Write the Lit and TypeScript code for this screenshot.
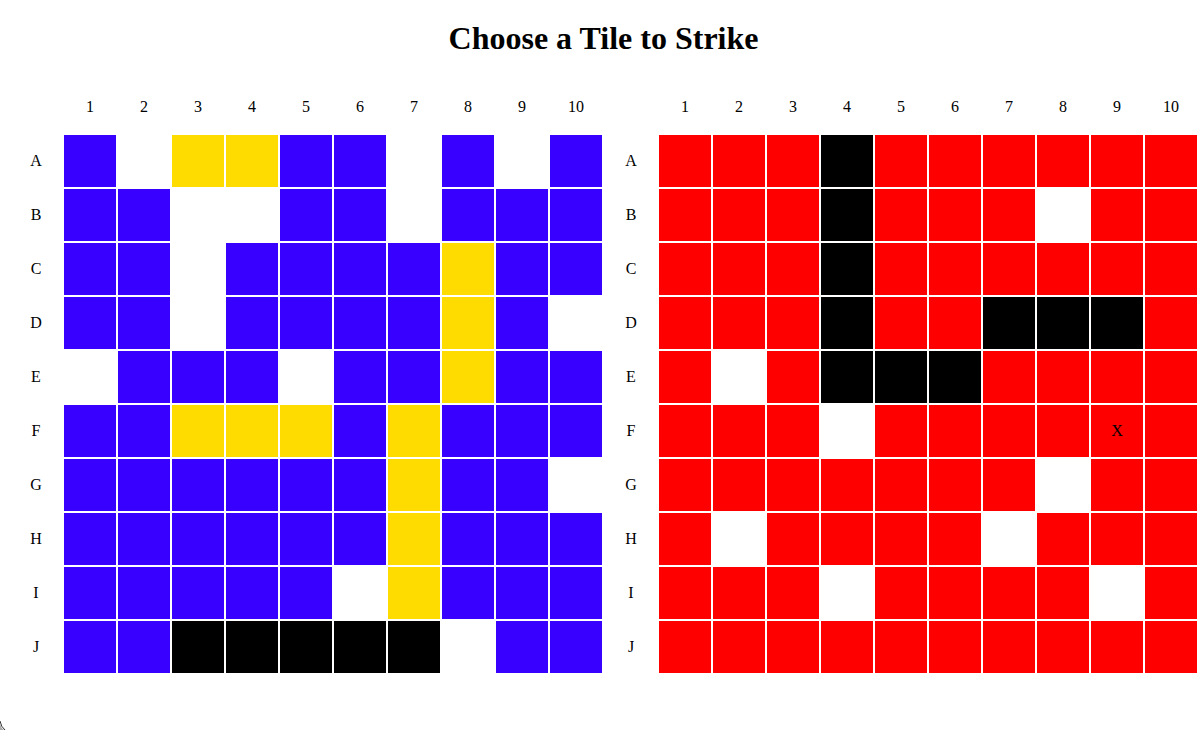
import { LitElement, html, css } from "lit";
import { customElement, property, state } from "lit/decorators.js";
import { classMap } from "lit/directives/class-map.js";

const ROWS = "ABCDEFGHIJ".split("");
const COLS = Array.from({ length: 10 }, (_, i) => i + 1);

// "." open sea, "m" missed shot, "s" ship, "h" hit ship
const PLAYER = [
  ".mss..m.m.",
  "..mm..m...",
  "..m....s..",
  "..m....s.m",
  "m...m..s..",
  "..sss.s...",
  "......s..m",
  "......s...",
  ".....ms...",
  "..hhhhhm..",
];

const ENEMY = [
  "...h......",
  "...h...m..",
  "...h......",
  "...h..hhh.",
  ".m.hhh....",
  "...m......",
  ".......m..",
  ".m....m...",
  "...m....m.",
  "..........",
];

@customElement("game-board")
class GameBoard extends LitElement {
  @property({ attribute: false }) tiles: string[] = [];
  @property({ type: Boolean }) enemy = false;
  @property() target = "";

  static styles = css`
    :host {
      display: block;
    }
    .board {
      display: grid;
      grid-template-columns: repeat(11, 52px);
      grid-auto-rows: 52px;
      gap: 2px;
    }
    .label,
    .tile {
      display: flex;
      align-items: center;
      justify-content: center;
      font: 16px "Liberation Serif", "Times New Roman", serif;
      color: #000;
    }
    .tile {
      margin: 0;
      padding: 0;
      border: 0;
      border-radius: 0;
      background: #3700ff;
    }
    button.tile {
      background: #f00;
      cursor: pointer;
    }
    .tile.ship {
      background: #ffdc00;
    }
    .tile.miss {
      background: #fff;
    }
    .tile.hit {
      background: #000;
    }
  `;

  private strike(id: string) {
    this.dispatchEvent(new CustomEvent("strike", { detail: id }));
  }

  private tile(kind: string, id: string) {
    const classes = classMap({
      tile: true,
      ship: kind === "s",
      miss: kind === "m",
      hit: kind === "h",
    });
    return this.enemy
      ? html`<button type="button" class=${classes} aria-label=${id} @click=${() => this.strike(id)}>${id === this.target ? "X" : ""}</button>`
      : html`<div class=${classes}></div>`;
  }

  render() {
    return html`
      <div class="board">
        <div class="label"></div>
        ${COLS.map((c) => html`<div class="label">${c}</div>`)}
        ${ROWS.map(
          (r, y) => html`
            <div class="label">${r}</div>
            ${COLS.map((c, x) => this.tile(this.tiles[y][x], r + c))}
          `
        )}
      </div>
    `;
  }
}

@customElement("app-root")
class AppRoot extends LitElement {
  @state() private target = "F9";

  static styles = css`
    :host {
      display: block;
      min-height: 100vh;
      box-sizing: border-box;
      padding-left: 7px;
      background: #fff;
      color: #000;
      font-family: "Liberation Serif", "Times New Roman", serif;
    }
    h1 {
      margin: 0;
      padding: 20px 0 24px;
      font-size: 32px;
      line-height: 37px;
      text-align: center;
    }
    .boards {
      display: flex;
      justify-content: space-evenly;
    }
    .corner {
      position: fixed;
      left: 0;
      bottom: 0;
      display: block;
    }
  `;

  render() {
    return html`
      <h1>Choose a Tile to Strike</h1>
      <main class="boards">
        <game-board .tiles=${PLAYER}></game-board>
        <game-board
          enemy
          .tiles=${ENEMY}
          .target=${this.target}
          @strike=${(e: CustomEvent) => (this.target = e.detail)}
        ></game-board>
      </main>
      <svg class="corner" width="6" height="10" viewBox="0 0 6 10" aria-hidden="true">
        <path d="M0 4 Q1 8 4 10 H0Z" fill="#aaa" />
        <path d="M0 1 Q1 7 5 10" fill="none" stroke="#333" />
      </svg>
    `;
  }
}
